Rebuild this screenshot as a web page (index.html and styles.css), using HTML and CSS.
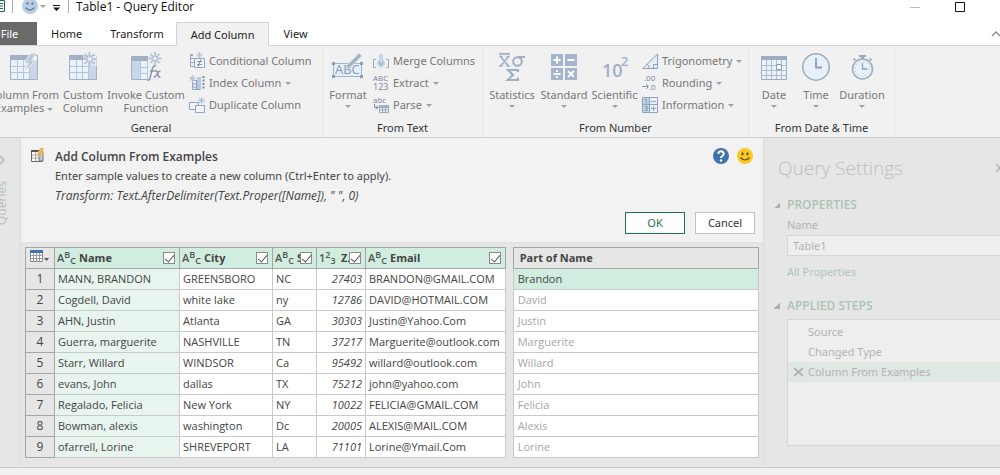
FILE: index.html
```html
<!DOCTYPE html>
<html lang="en">
<head>
<meta charset="utf-8">
<title>Table1 - Query Editor</title>
<link rel="stylesheet" href="styles.css">
</head>
<body>
<header class="titlebar">
  <svg class="app-icon" width="5" height="13" viewBox="0 0 5 13"><path d="M0 .5h4.500v11H0M0 3.500h3M0 6h3M0 8.500h3" fill="none" stroke="#217346"/></svg>
  <span class="bar"></span>
  <button class="quick" aria-label="Feedback"><svg width="16" height="16" viewBox="0 0 16 16"><circle cx="8" cy="7" r="8" fill="#b9cde6"/><circle cx="5.500" cy="4.500" r="1.200" fill="#66809f"/><circle cx="10.500" cy="4.500" r="1.200" fill="#66809f"/><path d="M3.500 8.500q4.500 5 9 0" fill="none" stroke="#66809f" stroke-width="1.300"/></svg><i class="arrow"></i></button>
  <button class="quick customize" aria-label="Customize toolbar"><svg width="7" height="6" viewBox="0 0 7 6"><path d="M0 0h7v1H0zM0 2.500h7L3.500 6z" fill="#111"/></svg></button>
  <span class="bar"></span>
  <h1 class="title">Table1 - Query Editor</h1>
  <button class="win minimize" aria-label="Minimize"><svg width="10" height="10"><path d="M0 5.500h10" stroke="#bbb"/></svg></button>
  <button class="win" aria-label="Maximize"><svg width="10" height="10"><path d="M.5.500h9v9h-9z" fill="none" stroke="#111"/></svg></button>
</header>

<nav class="tabs">
  <button class="tab file">File</button>
  <button class="tab">Home</button>
  <button class="tab transform">Transform</button>
  <button class="tab active">Add Column</button>
  <button class="tab">View</button>
  <button class="collapse" aria-label="Collapse ribbon"><svg width="8" height="6"><path d="M0 5l4-4 4 4" fill="none" stroke="#888" stroke-width="1.300"/></svg></button>
</nav>

<section class="ribbon">
  <div class="group general">
    <div class="tools">
      <button class="big from-examples">
        <svg width="28" height="28" viewBox="0 0 28 28"><path d="M0 2h20v5H0z" fill="#a3b1c7"/><path d="M.5 2.500h27v24H.5z" fill="none" stroke="#a3b1c7"/><path d="M20 7h7v19h-7z" fill="#c8d6e8"/><path d="M1 7h18v19H1z" fill="#e9f2fb"/><path d="M1 13.500h18M1 19.500h18M7.500 7v19M13.500 7v19M19.500 7v19" stroke="#b5c4d9"/><path d="M21 0h6l-5 7h4L14 19l4-9h-4z" fill="#bdcbdd" stroke="#f1f1f1"/></svg>
        <span>Column From<br>Examples <i class="arrow"></i></span></button>
      <button class="big custom">
        <svg width="28" height="28" viewBox="0 0 28 28"><path d="M0 2h28v5H0z" fill="#a3b1c7"/><path d="M.5 2.500h27v24H.5z" fill="#e9f2fb" stroke="#a3b1c7"/><path d="M1 3h18v4H1z" fill="#a3b1c7"/><path d="M19 7h8v19h-8z" fill="#c8d6e8"/><path d="M1 13.500h18M1 19.500h18M7.500 7v19M13.500 7v19M19.500 7v19" stroke="#b5c4d9"/><path d="M14 -1h14v14H14z" fill="#f1f1f1" opacity=".6"/><path d="M20.500-1v14M13.500 6h14M15.500 1l10 10M25.500 1l-10 10" stroke="#a9bad2" stroke-width="1.500"/><circle cx="20.500" cy="6" r="2" fill="#e9f2fb"/></svg>
        <span>Custom<br>Column</span></button>
      <button class="big invoke">
        <svg width="30" height="28" viewBox="0 0 30 28"><path d="M0 3h16v5H0z" fill="#a3b1c7"/><path d="M.5 3.500h26v23H.5z" fill="#e9f2fb" stroke="#a3b1c7"/><path d="M1 8h8v18H1z" fill="#c8d6e8"/><path d="M1 4h16v4H1z" fill="#a3b1c7"/><path d="M9.500 8v18M16.500 8v18M9 14.500h11M9 20.500h8" stroke="#b5c4d9"/><path d="M17-1h13v28H17z" fill="#f1f1f1" opacity=".85"/><path d="M24-1v13M17.500 5.500h13M19.500 1l9 9M28.500 1l-9 9" stroke="#a9bad2" stroke-width="1.500"/><circle cx="24" cy="5.500" r="1.800" fill="#e9f2fb"/><path d="M25 13q-3-1-4 4l-2 8q-.7 3-2.500 2M19 18h5M24 18q2-1 2.500 2l1 3q.7 2 2 1M29.500 18q-2 0-3 2.500t-3.500 4" fill="none" stroke="#8b96aa" stroke-width="1.500"/></svg>
        <span>Invoke Custom<br>Function</span></button>
      <div class="stack">
        <button class="small"><svg width="16" height="16" viewBox="0 0 16 16"><path d="M4 1.500H1.500v12H5M1.500 5.500H5M1.500 9.500H5" fill="none" stroke="#98a8c0"/><path d="M1 1h3v2H1z" fill="#98a8c0"/><path d="M10.500-1v6M7.500 2h6M8.500 0l4 4M12.500 0l-4 4" stroke="#b5c4d9"/><path d="M5.500 5.500h10v9h-10z" fill="#f2f5fa" stroke="#91a3c0"/><path d="M8 8.500h5M8 11.500h5M12 6.500l-3 7" stroke="#8190a9"/></svg>Conditional Column</button>
        <button class="small"><svg width="16" height="16" viewBox="0 0 16 16"><path d="M3.500 5.500h8v9h-8zM7.500 5v9M3.500 9h4M3.500 12h4" fill="#e5eef8" stroke="#91a3c0"/><path d="M8 2h4v12H8z" fill="#b8c9df"/><path d="M3.500 0v7M0 3.500h7M1 1l5 5M6 1L1 6" stroke="#b5c4d9"/><path d="M14.500 1v13" stroke="#7c899c" stroke-width="2" stroke-dasharray="2 1.500"/></svg>Index Column <i class="arrow"></i></button>
        <button class="small"><svg width="16" height="16" viewBox="0 0 16 16"><path d="M.5 5.500h9v7h-9z" fill="#f1f5fa" stroke="#91a3c0"/><path d="M6.500 8.500h9v7h-9z" fill="#f1f5fa" stroke="#91a3c0"/><path d="M12.500 0v7M9 3.500h7M10 1l5 5M15 1l-5 5" stroke="#b5c4d9"/></svg>Duplicate Column</button>
      </div>
    </div>
    <h2 class="group-name">General</h2>
  </div>
  <div class="group text">
    <div class="tools">
      <button class="big format">
        <svg width="32" height="28" viewBox="0 0 32 28"><path d="M1.500 10.500h28v13h-28z" fill="#e5eff9" stroke="#9db5d4"/><path d="M0 9h3v3H0zM28 9h3v3h-3zM0 22h3v3H0zM28 22h3v3h-3z" fill="#8f9caf"/><text x="3" y="21" class="glyph-format">ABC</text><path d="M14 16l1-4L27 0l3 3-12 12z" fill="#a6b4c9" stroke="#f1f1f1" stroke-width=".7"/></svg>
        <span>Format</span><i class="arrow"></i></button>
      <div class="stack">
        <button class="small"><svg width="16" height="16" viewBox="0 0 16 16"><path d="M3 6.500H.5v8H3M13 6.500h2.500v8H13" fill="none" stroke="#98a8c0"/><path d="M6 1h4v5l2 3v3l-4 3-4-3V9l2-3z" fill="#c3d5e7"/><path d="M6 9l2 3 2-3" fill="none" stroke="#91a3c0"/></svg>Merge Columns</button>
        <button class="small"><svg width="16" height="16" viewBox="0 0 16 16"><text x="0" y="6" class="glyph-small">ABC</text><text x="0" y="15" class="glyph-digits">123</text></svg>Extract <i class="arrow"></i></button>
        <button class="small"><svg width="16" height="16" viewBox="0 0 16 16"><text x="0" y="6" class="glyph-small">abc</text><path d="M1.500 7v3.500H5M3 8.500l2 2-2 2" fill="none" stroke="#7c899c"/><path d="M6.500 8.500h9v7h-9zM6 10.500h9M6 13h9M9.500 9v6M12.500 9v6" fill="#edf3fa" stroke="#98a8c0"/><path d="M6 8h10v2H6z" fill="#a3b1c7"/></svg>Parse <i class="arrow"></i></button>
      </div>
    </div>
    <h2 class="group-name">From Text</h2>
  </div>
  <div class="group number">
    <div class="tools">
      <button class="big statistics">
        <svg width="28" height="28" viewBox="0 0 28 28"><path d="M1 .8h11M2.500 3.500l8 9.500M10.500 3.500l-8 9.500M1.500 3.500h3M8.500 3.500h3M1 13h3.500M8.500 13H12" fill="none" stroke="#a1aec6" stroke-width="1.700"/><path d="M27 4h-7" fill="none" stroke="#a1aec6" stroke-width="2"/><circle cx="19.500" cy="8.500" r="4.300" fill="none" stroke="#a1aec6" stroke-width="2"/><path d="M20 19v-2H10l5 5-5.500 5H20v-2.500" fill="none" stroke="#a1aec6" stroke-width="2"/></svg>
        <span>Statistics</span><i class="arrow"></i></button>
      <button class="big standard">
        <svg width="28" height="28" viewBox="0 0 28 28"><path d="M1 1h12v12H1zM15 1h12v12H15zM1 15h12v12H1zM15 15h12v12H15z" fill="#a4b4cf"/><path d="M3.500 7h7M7 3.500v7M17.500 7h7M3.500 21h7M18 18l6 6M24 18l-6 6" stroke="#fff" stroke-width="1.800"/><path d="M6 17h2v2H6zM6 23h2v2H6z" fill="#fff"/></svg>
        <span>Standard</span><i class="arrow"></i></button>
      <button class="big scientific">
        <svg width="28" height="28" viewBox="0 0 28 28"><text x="1" y="24" class="glyph-ten">10</text><text x="20" y="13" class="glyph-power">2</text></svg>
        <span>Scientific</span><i class="arrow"></i></button>
      <div class="stack">
        <button class="small"><svg width="16" height="16" viewBox="0 0 16 16"><path d="M.7 15.500L15.500 1v14.500z" fill="#e5eef8" stroke="#8fa1bc"/><path d="M11.500 15v-3.500H15M5 11q3 2 2 4" fill="none" stroke="#8fa1bc"/></svg>Trigonometry <i class="arrow"></i></button>
        <button class="small"><svg width="16" height="16" viewBox="0 0 16 16"><text x="2" y="6" class="glyph-small">.00</text><text x="7" y="15" class="glyph-small">.0</text><path d="M0 11.500h6M4 9l2.500 2.500L4 14" fill="none" stroke="#8a96aa"/></svg>Rounding <i class="arrow"></i></button>
        <button class="small"><svg width="16" height="16" viewBox="0 0 16 16"><path d="M.5.500h15v15H.5z" fill="#e9f2fb" stroke="#8fa1bc"/><path d="M1 1h6v14H1z" fill="#c3d3e6"/><path d="M7.500 1v14M0 7.500h15M9 4.500h5M9 11.500h5M11.500 9v5" stroke="#8fa1bc"/><text x="2" y="7" class="glyph-tiny">1</text><text x="2" y="14" class="glyph-tiny">3</text></svg>Information <i class="arrow"></i></button>
      </div>
    </div>
    <h2 class="group-name">From Number</h2>
  </div>
  <div class="group date">
    <div class="tools">
      <button class="big day">
        <svg width="28" height="28" viewBox="0 0 28 28"><path d="M1.500 3.500h25v23h-25z" fill="#e9f2fb" stroke="#9eabbd"/><path d="M1 3h26v4H1z" fill="#9eabbd"/><path d="M1 12.500h26M1 17.500h26M1 22.500h26M6.500 7v19M11.500 7v19M16.500 7v19M21.500 7v19" stroke="#afbccd"/><path d="M16.500 11.500h5v5h-5z" fill="#fff" stroke="#8f9db0"/></svg>
        <span>Date</span><i class="arrow"></i></button>
      <button class="big hour">
        <svg width="28" height="28" viewBox="0 0 28 28"><circle cx="14" cy="14" r="13.200" fill="#e7f1fb" stroke="#9eabbd" stroke-width="1.500"/><path d="M14 5v9.500h6" fill="none" stroke="#909eb2" stroke-width="1.800"/></svg>
        <span>Time</span><i class="arrow"></i></button>
      <button class="big duration">
        <svg width="28" height="28" viewBox="0 0 28 28"><path d="M11 2h7v2h-7zM13 3h3v3h-3zM5 6l2-1 1 2-2 1zM24 6l-2-1-1 2 2 1z" fill="#9eabbd"/><circle cx="14.500" cy="16" r="10" fill="#e7f1fb" stroke="#9eabbd" stroke-width="1.500"/><circle cx="14.500" cy="16" r="7.500" fill="none" stroke="#aab8ca" stroke-dasharray="1 3"/><path d="M14.500 10v6h5" fill="none" stroke="#909eb2" stroke-width="1.300"/></svg>
        <span>Duration</span><i class="arrow"></i></button>
    </div>
    <h2 class="group-name">From Date &amp; Time</h2>
  </div>
</section>

<main class="workspace">
  <aside class="queries">
    <svg width="6" height="10"><path d="M0 1l4 4-4 4" fill="none" stroke="#b5b5b5" stroke-width="1.500"/></svg>
    <span class="queries-name">Queries</span>
  </aside>

  <section class="center">
    <div class="banner">
      <svg class="banner-icon" width="14" height="15" viewBox="0 0 14 15"><path d="M.5 2.500h11v11H.5z" fill="#fff" stroke="#666"/><path d="M0 2h8v2H0z" fill="#555"/><path d="M1 7h7M1 10h7M4.500 4v9" stroke="#aaa"/><path d="M8 4h4v9H8z" fill="#b9c9d8" stroke="#777"/><path d="M9 0h4l-2 4h2.500L6.500 11l2-5H6z" fill="#edb764"/></svg>
      <div class="banner-copy">
        <h2 class="banner-title">Add Column From Examples</h2>
        <p class="line">Enter sample values to create a new column (Ctrl+Enter to apply).</p>
        <p class="formula">Transform: Text.AfterDelimiter(Text.Proper([Name]), " ", 0)</p>
      </div>
      <div class="banner-side">
        <div class="badges">
          <button class="badge" aria-label="Help"><svg width="16" height="16" viewBox="0 0 16 16"><circle cx="8" cy="8" r="8" fill="#3f73af"/><path d="M5.300 6q0-2.700 2.700-2.700T10.700 6q0 1.200-1.400 2T8 10" fill="none" stroke="#fff" stroke-width="1.900"/><circle cx="8" cy="12.500" r="1.200" fill="#fff"/></svg></button>
          <button class="badge" aria-label="Send a smile"><svg width="16" height="16" viewBox="0 0 16 16"><circle cx="8" cy="8" r="8" fill="#fcc921"/><ellipse cx="5.500" cy="5.800" rx="1.100" ry="1.600" fill="#5d4a11"/><ellipse cx="10.500" cy="5.800" rx="1.100" ry="1.600" fill="#5d4a11"/><path d="M3.500 9.500q4.500 5 9 0" fill="none" stroke="#5d4a11" stroke-width="1.200"/></svg></button>
        </div>
        <div class="actions"><button class="action ok">OK</button><button class="action">Cancel</button></div>
      </div>
    </div>

    <div class="grids">
      <table class="grid source">
        <colgroup><col class="c-num"><col class="c-name"><col class="c-city"><col class="c-state"><col class="c-zip"><col></colgroup>
        <thead><tr>
          <th class="corner"><button class="corner-button" aria-label="Table options"><svg width="20" height="12" viewBox="0 0 20 12"><path d="M.5.500h12v11H.5z" fill="#fff" stroke="#888"/><path d="M0 0h13v3H0z" fill="#4673ae"/><path d="M0 5.500h13M0 8.500h13M3.500 3v8M6.500 3v8M9.500 3v8" stroke="#999"/><path d="M14 8h5l-2.500 3z" fill="#555"/></svg></button></th>
          <th><label class="head"><span class="type"><i>A</i><i>B</i><i>C</i></span><span class="head-name">Name</span><input class="check" type="checkbox" checked></label></th>
          <th><label class="head"><span class="type"><i>A</i><i>B</i><i>C</i></span><span class="head-name">City</span><input class="check" type="checkbox" checked></label></th>
          <th><label class="head"><span class="type"><i>A</i><i>B</i><i>C</i></span><span class="head-name">S</span><input class="check" type="checkbox" checked></label></th>
          <th><label class="head"><span class="type"><i>1</i><i>2</i><i>3</i></span><span class="head-name">Z.</span><input class="check" type="checkbox" checked></label></th>
          <th><label class="head"><span class="type"><i>A</i><i>B</i><i>C</i></span><span class="head-name">Email</span><input class="check" type="checkbox" checked></label></th>
        </tr></thead>
        <tbody>
          <tr><th>1</th><td>MANN, BRANDON</td><td>GREENSBORO</td><td>NC</td><td>27403</td><td>BRANDON@GMAIL.COM</td></tr>
          <tr><th>2</th><td>Cogdell, David</td><td>white lake</td><td>ny</td><td>12786</td><td>DAVID@HOTMAIL.COM</td></tr>
          <tr><th>3</th><td>AHN, Justin</td><td>Atlanta</td><td>GA</td><td>30303</td><td>Justin@Yahoo.Com</td></tr>
          <tr><th>4</th><td>Guerra, marguerite</td><td>NASHVILLE</td><td>TN</td><td>37217</td><td>Marguerite@outlook.com</td></tr>
          <tr><th>5</th><td>Starr, Willard</td><td>WINDSOR</td><td>Ca</td><td>95492</td><td>willard@outlook.com</td></tr>
          <tr><th>6</th><td>evans, John</td><td>dallas</td><td>TX</td><td>75212</td><td>john@yahoo.com</td></tr>
          <tr><th>7</th><td>Regalado, Felicia</td><td>New York</td><td>NY</td><td>10022</td><td>FELICIA@GMAIL.COM</td></tr>
          <tr><th>8</th><td>Bowman, alexis</td><td>washington</td><td>Dc</td><td>20005</td><td>ALEXIS@MAIL.COM</td></tr>
          <tr><th>9</th><td>ofarrell, Lorine</td><td>SHREVEPORT</td><td>LA</td><td>71101</td><td>Lorine@Ymail.Com</td></tr>
        </tbody>
      </table>
      <table class="grid sample">
        <thead><tr><th>Part of Name</th></tr></thead>
        <tbody>
          <tr class="given"><td>Brandon</td></tr>
          <tr><td>David</td></tr><tr><td>Justin</td></tr><tr><td>Marguerite</td></tr><tr><td>Willard</td></tr>
          <tr><td>John</td></tr><tr><td>Felicia</td></tr><tr><td>Alexis</td></tr><tr><td>Lorine</td></tr>
        </tbody>
      </table>
    </div>
  </section>

  <aside class="settings">
    <div class="settings-top"><h2 class="settings-title">Query Settings</h2><button class="close" aria-label="Close settings"><svg width="8" height="8"><path d="M0 0l8 8M8 0L0 8" stroke="#b0b0b0" stroke-width="1.300"/></svg></button></div>
    <h3 class="section">PROPERTIES</h3>
    <div class="section-body">
      <label class="field-name" for="query-name">Name</label>
      <input class="field" id="query-name" type="text" value="Table1">
      <a class="all" href="#">All Properties</a>
    </div>
    <h3 class="section">APPLIED STEPS</h3>
    <ul class="steps">
      <li class="step">Source</li>
      <li class="step">Changed Type</li>
      <li class="step selected"><svg width="11" height="10"><path d="M1 1l9 8M10 1L1 9" stroke="#b0b5b2" stroke-width="1.800"/></svg>Column From Examples</li>
    </ul>
  </aside>
</main>
<footer class="status"></footer>
</body>
</html>
```
FILE: styles.css
```css
* { box-sizing: border-box; }
body {
  margin: 0;
  min-height: 100vh;
  display: flex;
  flex-direction: column;
  overflow: hidden;
  background: #fff;
  color: #444;
  font: 11px/16px "Noto Sans", "Open Sans", sans-serif;
}
h1, h2, h3, p, ul { margin: 0; padding: 0; font-size: inherit; font-weight: normal; }
button { margin: 0; padding: 0; border: 0; background: none; color: inherit; font: inherit; }
svg { display: block; flex: none; overflow: visible; }
.arrow {
  display: inline-block;
  border: 3px solid transparent;
  border-top-color: #a0a0a0;
  border-bottom: 0;
  vertical-align: middle;
}

/* Title bar */
.titlebar { display: flex; align-items: center; height: 22px; padding-bottom: 9px; font: 12px/13px "Open Sans", sans-serif; }
.app-icon { margin-right: 7px; }
.bar { width: 1px; height: 13px; background: #aaa; }
.quick { display: flex; align-items: center; gap: 2px; margin-left: 9px; }
.customize { margin: 3px 8px 0 7px; }
.title { margin-left: 7px; flex: 1; color: #111; }
.win { margin-right: 35px; }

/* Tabs */
.tabs {
  display: flex;
  height: 24px;
  border-bottom: 1px solid #d4d4d4;
  color: #222;
}
.tab { padding: 0 14px; height: 24px; }
.tab.file { width: 37px; padding: 0 18px 0 0; background: #6a6a6a; color: #fff; height: 23px; }
.tab.transform { padding-right: 12px; }
.tab.active { border: 1px solid #d4d4d4; border-bottom: 0; background: #f1f1f1; }
.collapse { margin-left: auto; }

/* Ribbon */
.ribbon {
  display: flex;
  height: 92px;
  padding-top: 3px;
  overflow: hidden;
  background: #f1f1f1;
  border-bottom: 1px solid #cfcfcf;
  color: #777;
}
.group { flex: none; padding-bottom: 1px; border-right: 1px solid #e4e4e4; display: flex; flex-direction: column; }
.general { width: 343px; margin-left: -20px; }
.text { width: 160px; }
.number { width: 266px; }
.date { width: 146px; }
.tools { display: flex; flex: 1; }
.group-name { text-align: center; color: #333; }
.big { display: flex; flex-direction: column; align-items: center; white-space: nowrap; line-height: 13px; padding-top: 4px; }
.big > svg { margin-bottom: 7px; }
.big > .arrow { margin-top: 4px; }
.from-examples { width: 78px; margin-left: 5px; }
.custom { width: 40px; }
.invoke { width: 86px; }
.format { width: 50px; }
.statistics { width: 58px; }
.standard { width: 46px; }
.scientific { width: 55px; }
.day { width: 50px; }
.hour { width: 34px; }
.duration { width: 58px; }
.stack { display: flex; flex-direction: column; gap: 6px; padding-top: 4px; }
.small { display: flex; align-items: center; gap: 4px; white-space: nowrap; height: 16px; }
.glyph-format { font: 13px "Open Sans"; fill: #8a99b4; }
.glyph-small { font: 8px "Open Sans"; fill: #76839a; }
.glyph-digits { font: 9px "Open Sans"; fill: #76839a; }
.glyph-tiny { font: 7px "Open Sans"; fill: #66758c; }
.glyph-ten { font: 600 18px "Open Sans"; fill: #a1aec6; }
.glyph-power { font: 600 13px "Open Sans"; fill: #a1aec6; }

/* Workspace */
.workspace { flex: 1; display: grid; grid-template-columns: 21px minmax(0, 1fr) 236px; background: #e6e6e6; }
.queries { padding-top: 17px; border-right: 1px solid #dcdcdc; color: #b8c0bc; }
.queries-name { writing-mode: vertical-rl; transform: rotate(180deg); margin-top: 16px; width: 16px; margin-left: -6px; font-size: 12px; }
.center { border-right: 1px solid #dcdcdc; }
.banner { display: flex; height: 105px; padding: 10px 8px 10px 10px; background: #f2f2f2; border-bottom: 1px solid #e0e0e0; }
.banner-icon { margin-right: 10px; }
.banner-copy { flex: 1; line-height: 20px; }
.banner-title { font: 600 12px/18px "Open Sans", sans-serif; }
.formula { font: italic 12px/20px "Open Sans", sans-serif; }
.banner-side { display: flex; flex-direction: column; gap: 48px; }
.badges { display: flex; justify-content: flex-end; gap: 8px; padding-right: 2px; }
.actions { display: flex; gap: 10px; }
.action { width: 60px; height: 22px; border: 1px solid #c0c0c0; background: #fff; color: #333; }
.action.ok { border-color: #217346; color: #217346; }

/* Data grids */
.grids { display: flex; gap: 7px; padding: 4px 4px 9px; }
.grid { border-collapse: collapse; table-layout: fixed; background: #fff; font-family: "Open Sans", sans-serif; }
.source { flex: 481 1 0; width: 481px; }
.sample { flex: 246 1 0; width: 246px; }
.grid th, .grid td { height: 21px; padding: 0 3px; border: 1px solid #c9c9c9; text-align: left; white-space: nowrap; line-height: 16px; }
.grid thead th { background: #d1eddf; border: 1px solid #a6a6a6; font-weight: bold; }
.grid tbody th { background: #e6e6e6; border-color: #a6a6a6; text-align: center; font-weight: normal; font-size: 12px; }
.grid thead .corner, .grid.sample thead th { background: #e6e6e6; }
.corner-button { margin-left: 2px; }
.c-num { width: 29px; }
.c-name { width: 125px; }
.c-city { width: 93px; }
.c-state { width: 44px; }
.c-zip { width: 49px; }
.source thead th { padding: 0 4px 0 2px; }
.source td:nth-child(2) { background: #e8f4ee; }
.source td:nth-child(5) { text-align: right; font-style: italic; }
.head { display: flex; align-items: center; overflow: hidden; }
.type { flex: none; display: flex; align-items: center; width: 22px; height: 18px; font: 600 9px/10px "Open Sans", sans-serif; color: #555; }
.type i { font-style: normal; }
.type i:nth-child(1) { font-size: 11px; }
.type i:nth-child(2) { padding-bottom: 7px; }
.type i:nth-child(3) { padding-top: 6px; }
.head-name { flex: 1 1 0; min-width: 0; overflow: hidden; }
.check { flex: none; position: relative; appearance: none; width: 12px; height: 12px; margin: 0; border: 1px solid #8a8a8a; background: #fff; }
.check:checked::after { content: ""; position: absolute; left: 3px; top: 0; width: 4px; height: 8px; border: solid #555; border-width: 0 1px 1px 0; transform: rotate(40deg); }
.grid.sample th { padding-left: 6px; }
.grid.sample td { padding-left: 4px; color: #a6a6a6; }
.grid.sample .given td { background: #d1eddf; color: #444; }

/* Query settings */
.settings { padding: 16px 0 20px 10px; color: #b3b3b3; overflow: hidden; }
.settings-top { display: flex; align-items: center; padding-left: 4px; }
.settings-title { flex: 1; color: #b9bfbc; font: 300 19px/28px "Open Sans", sans-serif; }
.close { margin-right: -4px; }
.section { display: flex; align-items: center; margin-top: 15px; color: #adc2b7; font: 600 12px/16px "Open Sans", sans-serif; }
.section::before { content: ""; width: 6px; height: 6px; margin-right: 7px; background: linear-gradient(135deg, transparent 50%, #b0b0b0 50%); }
.section-body { padding-left: 13px; display: flex; flex-direction: column; align-items: stretch; }
.field-name { margin: 4px 0 2px; }
.field { width: 100%; height: 21px; padding: 0 5px; border: 1px solid #d5d5d5; border-right: 0; background: #eee; color: #b3b3b3; font: inherit; }
.all { margin-top: 8px; color: #b3c3c1; text-decoration: none; }
.section-body + .section { margin-top: 18px; }
.steps { height: 127px; margin: 5px 0 0 13px; padding-top: 2px; border: 1px solid #d5d5d5; border-right: 0; background: #eee; list-style: none; }
.step { height: 20px; padding-left: 20px; line-height: 20px; }
.step.selected { display: flex; align-items: center; gap: 4px; padding-left: 5px; background: #e0e8e4; }
.status { height: 8px; border-top: 1px solid #c9c9c9; background: #f1f1f1; }
```
